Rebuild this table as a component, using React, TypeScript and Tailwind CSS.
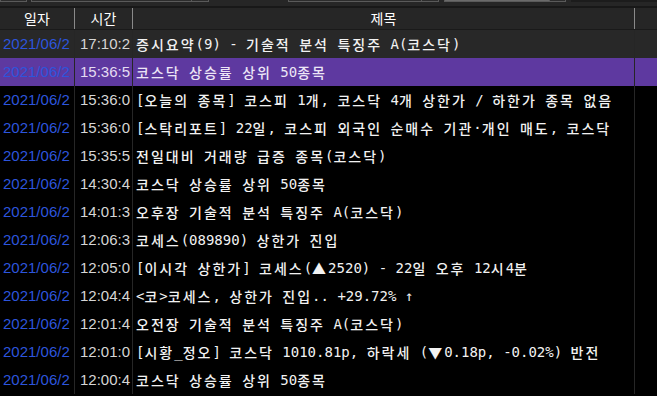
import React from "react";

const rows: [string, string][] = [
  ["17:10:2", "증시요약(9) - 기술적 분석 특징주 A(코스닥)"],
  ["15:36:5", "코스닥 상승률 상위 50종목"],
  ["15:36:0", "[오늘의 종목] 코스피 1개, 코스닥 4개 상한가 / 하한가 종목 없음"],
  ["15:36:0", "[스탁리포트] 22일, 코스피 외국인 순매수 기관·개인 매도, 코스닥"],
  ["15:35:5", "전일대비 거래량 급증 종목(코스닥)"],
  ["14:30:4", "코스닥 상승률 상위 50종목"],
  ["14:01:3", "오후장 기술적 분석 특징주 A(코스닥)"],
  ["12:06:3", "코세스(089890) 상한가 진입"],
  ["12:05:0", "[이시각 상한가] 코세스(▲2520) - 22일 오후 12시4분"],
  ["12:04:4", "<코>코세스, 상한가 진입.. +29.72% ↑"],
  ["12:01:4", "오전장 기술적 분석 특징주 A(코스닥)"],
  ["12:01:0", "[시황_정오] 코스닥 1010.81p, 하락세 (▼0.18p, -0.02%) 반전"],
  ["12:00:4", "코스닥 상승률 상위 50종목"],
];

const kr = { fontFamily: '"Noto Sans CJK KR", sans-serif' };
const lat = { fontFamily: '"Liberation Sans", Arial, sans-serif' };
const mono = { fontFamily: '"DejaVu Sans Mono", "Noto Sans CJK KR", monospace' };

function Title({ text }: { text: string }) {
  const parts = text.match(/[\uAC00-\uD7A3\u3131-\u318E▲▼]+|[^\uAC00-\uD7A3\u3131-\u318E▲▼]+/g) || [];
  return (
    <>
      {parts.map((p, i) =>
        /[\uAC00-\uD7A3\u3131-\u318E▲▼]/.test(p) ? (
          <span key={i} className="text-[14px] tracking-[2px] font-medium" style={kr}>
            {p}
          </span>
        ) : (
          <span key={i} className="text-[14px] tracking-[0px] whitespace-pre" style={mono}>
            {p}
          </span>
        )
      )}
    </>
  );
}

export default function App() {
  return (
    <div className="w-[657px] h-[396px] overflow-hidden bg-black flex flex-col">
      {/* top strip */}
      <div className="h-[6px] bg-[#262626] flex items-start">
        <div className="w-[27px] h-[2px] border-x border-b border-[#5a5a5a] bg-[#2c2c2c]" />
        <div className="ml-[4px] w-[178px] h-[2px] border-x border-b border-[#5a5a5a] bg-[#2c2c2c] flex justify-end">
          <div className="w-[17px] h-full border-l border-[#5a5a5a]" />
        </div>
        <div className="ml-[79px] w-[151px] h-[2px] border-x border-b border-[#5a5a5a] bg-[#2c2c2c] flex justify-end">
          <div className="w-[17px] h-full border-l border-[#5a5a5a]" />
        </div>
        <div className="ml-[5px] w-[122px] h-[2px] border-x border-b border-[#5a5a5a] bg-[#6a6a6a] flex justify-end">
          <div className="w-[16px] h-full border-l border-[#5a5a5a] bg-[#2c2c2c]" />
        </div>
        <div className="ml-[5px] flex-1 h-[2px] bg-[#1c1c1c]" />
      </div>
      <div className="h-[2px] bg-[#181818]" />
      {/* header */}
      <div className="h-[22px] bg-[#262626] flex text-white text-[14px] border-b border-[#1a1a1a]" style={kr}>
        <div className="w-[75px] flex items-center justify-center border-r border-[#8a8a8a]">일자</div>
        <div className="w-[58px] flex items-center justify-center border-r border-[#8a8a8a]">시간</div>
        <div className="w-[502px] flex items-center justify-center border-r border-[#8a8a8a]">제목</div>
        <div className="flex-1" />
      </div>
      {/* rows */}
      <div className="flex flex-col">
        {rows.map(([t, title], i) => {
          const bg = i === 0 ? "bg-[#282828]" : i === 1 ? "bg-[#5e39a0]" : "bg-black";
          const timeC = i === 1 ? "text-[#e4dcf2]" : "text-[#d6d6d6]";
          const titleC = i === 1 ? "text-[#ece6f6]" : "text-[#f2f2f2]";
          return (
            <div key={i} className={`h-[28px] flex ${bg}`}>
              <div className="w-[75px] border-r border-[#262626] flex items-center pl-[3px] overflow-hidden whitespace-nowrap text-[15px] text-[#2d55dc]" style={lat}>
                2021/06/2
              </div>
              <div className="w-[58px] border-r border-[#262626] flex items-center pl-[5px] overflow-hidden whitespace-nowrap text-[15px]" style={lat}>
                <span className={timeC}>{t}</span>
              </div>
              <div className={`w-[502px] border-r border-[#262626] flex items-center pl-[3px] overflow-hidden whitespace-nowrap ${titleC}`}>
                <Title text={title} />
              </div>
              <div className="flex-1" />
            </div>
          );
        })}
      </div>
    </div>
  );
}
